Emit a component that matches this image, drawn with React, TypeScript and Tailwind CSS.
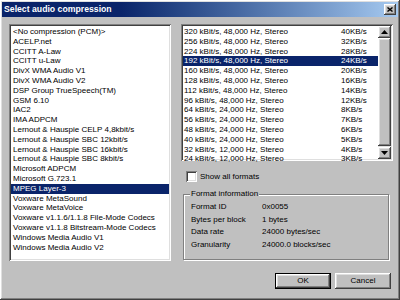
import React from 'react'

const codecs = [
  '<No compression (PCM)>',
  'ACELP.net',
  'CCITT A-Law',
  'CCITT u-Law',
  'DivX WMA Audio V1',
  'DivX WMA Audio V2',
  'DSP Group TrueSpeech(TM)',
  'GSM 6.10',
  'IAC2',
  'IMA ADPCM',
  'Lernout & Hauspie CELP 4,8kbit/s',
  'Lernout & Hauspie SBC 12kbit/s',
  'Lernout & Hauspie SBC 16kbit/s',
  'Lernout & Hauspie SBC 8kbit/s',
  'Microsoft ADPCM',
  'Microsoft G.723.1',
  'MPEG Layer-3',
  'Voxware MetaSound',
  'Voxware MetaVoice',
  'Voxware v1.1.6/1.1.8 File-Mode Codecs',
  'Voxware v1.1.8 Bitstream-Mode Codecs',
  'Windows Media Audio V1',
  'Windows Media Audio V2',
]

const formats: [string, string][] = [
  ['320 kBit/s, 48,000 Hz, Stereo', '40KB/s'],
  ['256 kBit/s, 48,000 Hz, Stereo', '32KB/s'],
  ['224 kBit/s, 48,000 Hz, Stereo', '28KB/s'],
  ['192 kBit/s, 48,000 Hz, Stereo', '24KB/s'],
  ['160 kBit/s, 48,000 Hz, Stereo', '20KB/s'],
  ['128 kBit/s, 48,000 Hz, Stereo', '16KB/s'],
  ['112 kBit/s, 48,000 Hz, Stereo', '14KB/s'],
  ['96 kBit/s, 48,000 Hz, Stereo', '12KB/s'],
  ['64 kBit/s, 24,000 Hz, Stereo', '8KB/s'],
  ['56 kBit/s, 24,000 Hz, Stereo', '7KB/s'],
  ['48 kBit/s, 24,000 Hz, Stereo', '6KB/s'],
  ['40 kBit/s, 24,000 Hz, Stereo', '5KB/s'],
  ['32 kBit/s, 12,000 Hz, Stereo', '4KB/s'],
  ['24 kBit/s, 12,000 Hz, Stereo', '3KB/s'],
]

const info: [string, string][] = [
  ['Format ID', '0x0055'],
  ['Bytes per block', '1 bytes'],
  ['Data rate', '24000 bytes/sec'],
  ['Granularity', '24000.0 blocks/sec'],
]

const raised =
  'bg-[#c0c0c0] shadow-[inset_-1px_-1px_#404040,inset_1px_1px_#ffffff,inset_-2px_-2px_#808080,inset_2px_2px_#dfdfdf]'
const sunken =
  'bg-white shadow-[inset_1px_1px_#808080,inset_-1px_-1px_#ffffff,inset_2px_2px_#404040,inset_-2px_-2px_#dfdfdf]'

function ArrowButton({ down }: { down?: boolean }) {
  return (
    <div className={`flex h-[12px] w-[13px] items-center justify-center ${raised}`}>
      <svg width="7" height="4" viewBox="0 0 7 4">
        <polygon points={down ? '0,0 7,0 3.5,4' : '0,4 7,4 3.5,0'} fill="#000" />
      </svg>
    </div>
  )
}

export default function App() {
  return (
    <div
      className={`flex h-[300px] w-[400px] flex-col p-[2px] text-[8px] text-black ${raised}`}
      style={{ fontFamily: '"Liberation Sans", Arial, sans-serif' }}
    >
      {/* Title bar */}
      <div className="flex h-[15px] items-center justify-between bg-linear-to-r from-[#0a246a] from-30% to-[#a6caf0] px-[2px]">
        <span className="text-[8.7px] font-bold text-white">Select audio compression</span>
        <div className={`flex h-[11px] w-[12px] items-center justify-center ${raised}`}>
          <svg width="6" height="5" viewBox="0 0 6 5">
            <path d="M0.5 0.5 L5.5 4.5 M5.5 0.5 L0.5 4.5" stroke="#000" strokeWidth="1.4" />
          </svg>
        </div>
      </div>

      {/* Main row */}
      <div className="mt-[7px] flex gap-[10px] pl-[7px]">
        {/* Codec list */}
        <div className={`h-[237px] w-[162px] shrink-0 p-[2px] pt-[3px] ${sunken}`}>
          {codecs.map((c) => (
            <div
              key={c}
              className={`h-[9.8px] whitespace-nowrap pl-[2px] leading-[9.8px] ${
                c === 'MPEG Layer-3' ? 'bg-[#0a246a] text-white' : ''
              }`}
            >
              {c}
            </div>
          ))}
        </div>

        {/* Right column */}
        <div className="w-[212px] shrink-0">
          <div className={`flex h-[137px] w-[212px] p-[2px] ${sunken}`}>
            <div className="flex-1 pt-[1px]">
              {formats.map(([a, b], i) => (
                <div
                  key={a}
                  className={`grid h-[9.8px] grid-cols-[157px_1fr] whitespace-nowrap pl-[1px] leading-[9.8px] ${
                    i === 3 ? 'bg-[#0a246a] text-white' : ''
                  }`}
                >
                  <span>{a}</span>
                  <span>{b}</span>
                </div>
              ))}
            </div>
            <div className="flex w-[13px] flex-col bg-[#e0e0e0]">
              <ArrowButton />
              <div className={`mb-[1px] flex-1 ${raised}`} />
              <ArrowButton down />
            </div>
          </div>

          {/* Checkbox */}
          <div className="mt-[10px] flex h-[11px] w-[212px] items-center justify-start pl-[5px]">
            <span className={`block h-[11px] w-[11px] shrink-0 ${sunken}`} />
            <span className="ml-[3px] block">Show all formats</span>
          </div>

          <div className="relative mt-[12px] ml-[2px] h-[66px] w-[206px] border border-[#808080] shadow-[1px_1px_0_#ffffff,inset_1px_1px_0_#ffffff]">
            <span className="absolute -top-[6px] left-[6px] bg-[#c0c0c0] px-[1px] leading-[10px]">
              Format information
            </span>
            <div className="pt-[6px] pl-[7px]">
              {info.map(([k, v]) => (
                <div key={k} className="grid h-[12.5px] grid-cols-[71px_1fr] items-center">
                  <span>{k}</span>
                  <span>{v}</span>
                </div>
              ))}
            </div>
          </div>
        </div>
      </div>

      {/* Buttons */}
      <div className="mt-[12px] flex justify-end gap-[4px] pr-[7px]">
        <div className="h-[16px] w-[56px] border border-black">
          <div className={`flex h-full items-center justify-center ${raised}`}>OK</div>
        </div>
        <div className={`flex h-[16px] w-[56px] items-center justify-center ${raised}`}>Cancel</div>
      </div>
    </div>
  )
}
